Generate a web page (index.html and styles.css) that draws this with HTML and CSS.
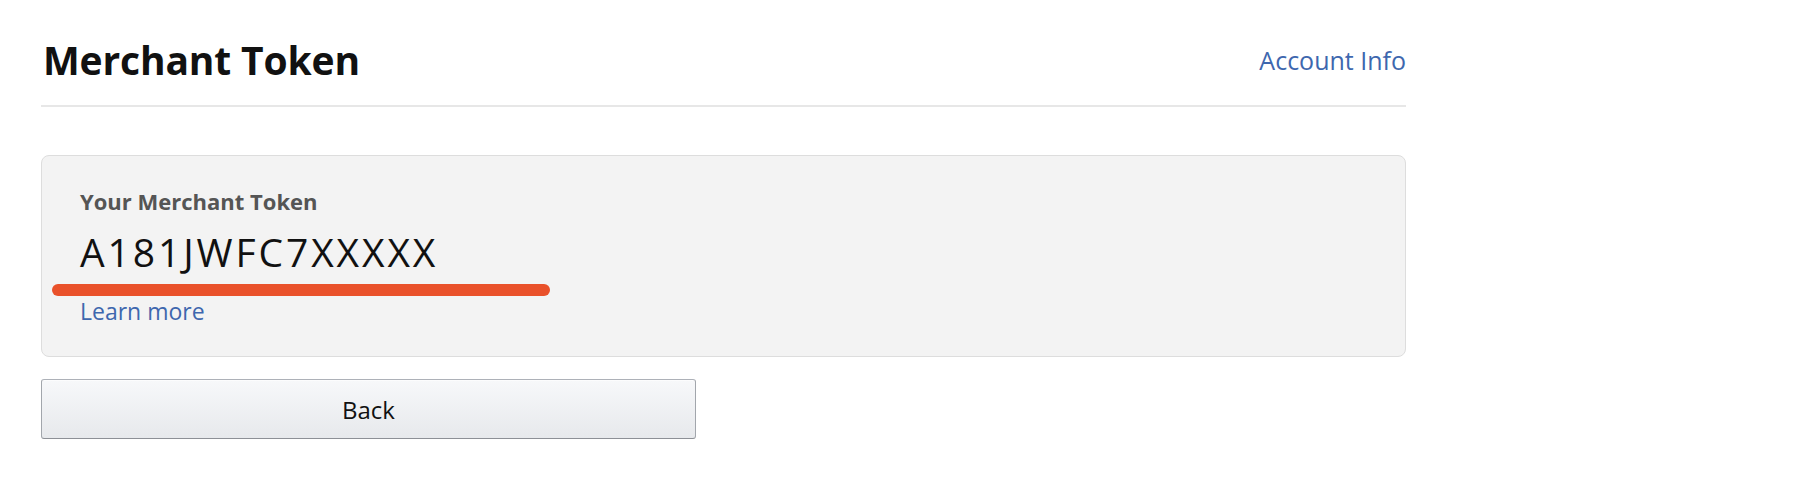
FILE: index.html
```html
<!DOCTYPE html>
<html lang="en">
<head>
<meta charset="utf-8">
<title>Merchant Token</title>
<link rel="stylesheet" href="styles.css">
</head>
<body>
<div class="page">
  <header class="top">
    <h1 class="title">Merchant Token</h1>
    <a class="account-link" href="#">Account Info</a>
  </header>
  <section class="card">
    <div class="label">Your Merchant Token</div>
    <div class="token">A181JWFC7XXXXX</div>
    <a class="learn" href="#">Learn more</a>
    <span class="mark"></span>
  </section>
  <button class="back" type="button">Back</button>
</div>
</body>
</html>
```

FILE: styles.css
```css
html, body {
  margin: 0;
  padding: 0;
  background: #ffffff;
}

body {
  font-family: "Open Sans", "Noto Sans", Arial, sans-serif;
  color: #111111;
}

.page {
  width: 1365px;
  margin-left: 41px;
  display: flex;
  flex-direction: column;
  align-items: flex-start;
}

.top {
  align-self: stretch;
  display: flex;
  justify-content: space-between;
  align-items: flex-start;
  padding-top: 34px;
  padding-bottom: 19px;
  border-bottom: 2px solid #e7e7e7;
}

.title {
  margin: 0 0 0 2px;
  font-size: 39px;
  line-height: 52px;
  font-weight: 700;
  color: #111111;
  letter-spacing: -0.15px;
}

.account-link {
  margin-top: 9px;
  font-size: 25px;
  line-height: 34px;
  color: #3e67ae;
  text-decoration: none;
}

.card {
  position: relative;
  align-self: stretch;
  margin-top: 48px;
  padding: 30px 38px 30px 38px;
  background: #f3f3f3;
  border: 1px solid #dddddd;
  border-radius: 8px;
  display: flex;
  flex-direction: column;
  align-items: flex-start;
}

.label {
  font-size: 22px;
  line-height: 30px;
  font-weight: 700;
  color: #555555;
}

.token {
  margin-top: 14px;
  font-size: 39px;
  line-height: 44px;
  color: #111111;
  letter-spacing: 2.9px;
}

.learn {
  margin-top: 22px;
  font-size: 23px;
  line-height: 30px;
  color: #3e67ae;
  text-decoration: none;
}

.mark {
  position: absolute;
  left: 10px;
  top: 128px;
  width: 498px;
  height: 12px;
  border-radius: 6px;
  background: #e9512a;
}

.back {
  margin-top: 22px;
  width: 655px;
  height: 60px;
  padding: 0;
  font-family: "Open Sans", "Noto Sans", Arial, sans-serif;
  font-size: 24px;
  color: #111111;
  background: linear-gradient(to bottom, #f7f8fa, #e7e9ec);
  border: 1px solid #adb1b8;
  border-color: #adb1b8 #a2a6ac #8d9096;
  border-radius: 3px;
  box-shadow: inset 0 1px 0 rgba(255, 255, 255, 0.6);
}
```
